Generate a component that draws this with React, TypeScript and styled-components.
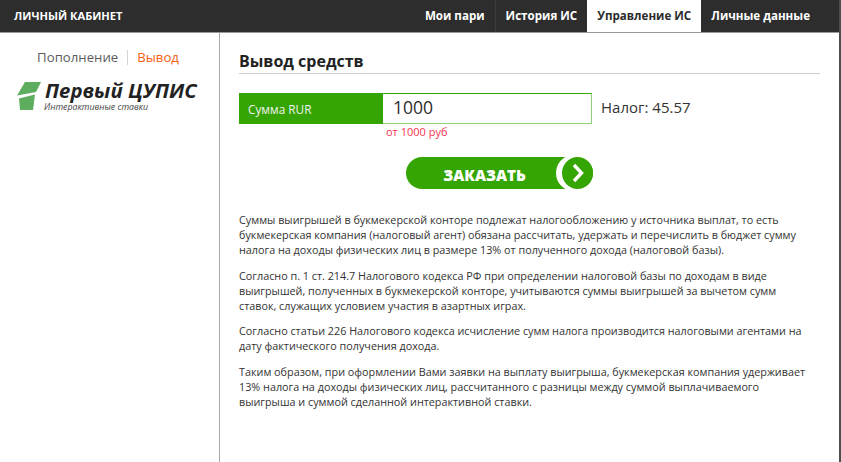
import styled, { createGlobalStyle } from 'styled-components';

const GlobalStyle = createGlobalStyle`
  html, body {
    margin: 0;
    padding: 0;
    background: #fff;
    font-family: 'Open Sans', 'Noto Sans', sans-serif;
    color: #2d2d2d;
  }
  * {
    box-sizing: border-box;
  }
`;

const Page = styled.div`
  width: 841px;
  height: 462px;
  display: flex;
  flex-direction: column;
  overflow: hidden;
  border-right: 2px solid #4d4d4d;
`;

const Header = styled.header`
  height: 33px;
  flex: none;
  display: flex;
  align-items: stretch;
  justify-content: space-between;
  padding-right: 19px;
  background: #2d2d2d;
  border-bottom: 1px solid #999;
`;

const Title = styled.div`
  padding-left: 14px;
  font-size: 11.1px;
  font-weight: 700;
  line-height: 32px;
  color: #fff;
`;

const Nav = styled.nav`
  display: flex;
  align-items: stretch;
`;

const NavItem = styled.a<{ $active?: boolean; $divided?: boolean }>`
  display: block;
  padding: 0 10px;
  font-size: 11.6px;
  font-weight: 700;
  line-height: 32px;
  color: ${p => (p.$active ? '#2d2d2d' : '#fff')};
  background: ${p => (p.$active ? '#fff' : 'transparent')};
  border-left: ${p => (p.$divided ? '1px solid #3c3c3c' : 'none')};
`;

const Body = styled.div`
  flex: 1;
  display: flex;
`;

const Sidebar = styled.aside`
  width: 220px;
  flex: none;
  border-right: 1px solid #a8a8a8;
  padding-top: 16px;
`;

const Tabs = styled.div`
  display: flex;
  justify-content: center;
  align-items: center;
  padding-right: 3px;
  height: 16px;
`;

const Tab = styled.span<{ $active?: boolean }>`
  font-size: 13.2px;
  font-weight: 500;
  color: ${p => (p.$active ? '#f4600f' : '#5c5c5c')};
  line-height: 16px;
`;

const TabDivider = styled.span`
  width: 1px;
  height: 15px;
  margin: 0 9px;
  background: #d5d5d5;
`;

const Logo = styled.div`
  display: flex;
  align-items: flex-start;
  margin: 17px 0 0 17px;
`;

const LogoText = styled.div`
  margin: -4px 0 0 3px;
  font-style: italic;
`;

const LogoName = styled.div`
  font-size: 20.3px;
  font-weight: 700;
  line-height: 25px;
  color: #222;
  white-space: nowrap;
`;

const LogoSub = styled.div`
  margin: -1px 0 0 -1px;
  font-size: 8.8px;
  line-height: 11px;
  color: #444;
`;

const Main = styled.main`
  flex: 1;
  padding: 17px 19px 0 19px;
`;

const Heading = styled.h1`
  margin: 0;
  height: 24px;
  border-bottom: 1px solid #ccc;
  font-size: 16px;
  font-weight: 700;
  line-height: 22px;
  color: #222;
`;

const FormRow = styled.div`
  display: flex;
  align-items: center;
  margin-top: 19px;
`;

const AmountLabel = styled.label`
  width: 144px;
  height: 31px;
  padding-left: 9px;
  background: #35a503;
  color: #f2f2f2;
  font-size: 11.8px;
  font-weight: 500;
  line-height: 32px;
`;

const AmountInput = styled.input`
  width: 209px;
  height: 31px;
  padding: 0 10px 3px;
  border: 1px solid #8fd07a;
  border-left: none;
  border-top-color: #35a503;
  outline: none;
  background: #fff;
  font-family: inherit;
  font-size: 17.5px;
  color: #2d2d2d;
`;

const Tax = styled.div`
  margin-left: 9px;
  padding-bottom: 3px;
  font-size: 15px;
  line-height: 20px;
  color: #333;
`;

const Hint = styled.div`
  margin: 1px 0 0 147px;
  font-size: 11px;
  line-height: 13px;
  color: #f5334f;
`;

const OrderButton = styled.button`
  display: block;
  position: relative;
  width: 187px;
  height: 32px;
  margin: 19px 0 0 167px;
  padding: 5px 30px 0 0;
  border: none;
  border-radius: 16px;
  background: #35a503;
  color: #fff;
  font-family: inherit;
  font-size: 15.2px;
  font-weight: 800;
  line-height: 27px;
  text-align: center;
`;

const ArrowBadge = styled.span`
  position: absolute;
  right: 0;
  top: 0;
  width: 31px;
  height: 32px;
  border-radius: 50%;
  background: #35a503;
  box-shadow: -4px 0 0 2px #fff;
  display: flex;
  align-items: center;
  justify-content: center;
`;

const Copy = styled.div`
  margin-top: 23px;
  padding-right: 5px;
  font-size: 10.8px;
  line-height: 15px;
  color: #333;
`;

const Paragraph = styled.p`
  margin: 0 0 10.5px;
`;

const App = () => (
  <Page>
    <GlobalStyle />
    <Header>
      <Title>ЛИЧНЫЙ КАБИНЕТ</Title>
      <Nav>
        <NavItem>Мои пари</NavItem>
        <NavItem $divided>История ИС</NavItem>
        <NavItem $active>Управление ИС</NavItem>
        <NavItem>Личные данные</NavItem>
      </Nav>
    </Header>
    <Body>
      <Sidebar>
        <Tabs>
          <Tab>Пополнение</Tab>
          <TabDivider />
          <Tab $active>Вывод</Tab>
        </Tabs>
        <Logo>
          <svg width="25" height="29" viewBox="0 0 25 29">
            <path d="M8 0H24L19 10L0 13.5Z M2 16.5L18 12.5L16 28H3Z" fill="#5fad5f" />
          </svg>
          <LogoText>
            <LogoName>Первый ЦУПИС</LogoName>
            <LogoSub>Интерактивные ставки</LogoSub>
          </LogoText>
        </Logo>
      </Sidebar>
      <Main>
        <Heading>Вывод средств</Heading>
        <FormRow>
          <AmountLabel>Сумма RUR</AmountLabel>
          <AmountInput defaultValue="1000" />
          <Tax>Налог: 45.57</Tax>
        </FormRow>
        <Hint>от 1000 руб</Hint>
        <OrderButton>
          ЗАКАЗАТЬ
          <ArrowBadge>
            <svg width="14" height="20" viewBox="0 0 14 20">
              <path d="M3 2L10.5 10L3 18" fill="none" stroke="#fff" strokeWidth="3.4" />
            </svg>
          </ArrowBadge>
        </OrderButton>
        <Copy>
          <Paragraph>
            Суммы выигрышей в букмекерской конторе подлежат налогообложению у источника выплат, то есть букмекерская компания (налоговый агент) обязана рассчитать, удержать и перечислить в бюджет сумму налога на доходы физических лиц в размере 13% от полученного дохода (налоговой базы).
          </Paragraph>
          <Paragraph>
            Согласно п. 1 ст. 214.7 Налогового кодекса РФ при определении налоговой базы по доходам в виде выигрышей, полученных в букмекерской конторе, учитываются суммы выигрышей за вычетом сумм ставок, служащих условием участия в азартных играх.
          </Paragraph>
          <Paragraph>
            Согласно статьи 226 Налогового кодекса исчисление сумм налога производится налоговыми агентами на дату фактического получения дохода.
          </Paragraph>
          <Paragraph>
            Таким образом, при оформлении Вами заявки на выплату выигрыша, букмекерская компания удерживает 13% налога на доходы физических лиц, рассчитанного с разницы между суммой выплачиваемого выигрыша и суммой сделанной интерактивной ставки.
          </Paragraph>
        </Copy>
      </Main>
    </Body>
  </Page>
);

export default App;
